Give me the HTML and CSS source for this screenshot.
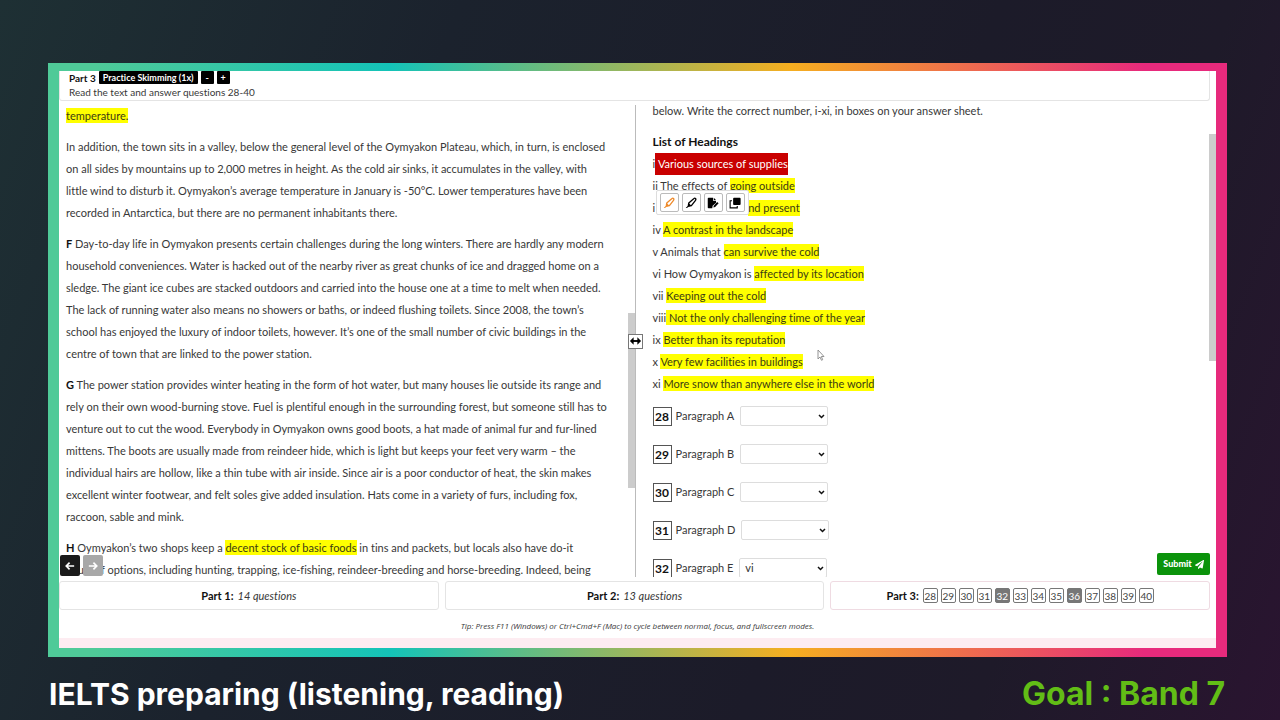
FILE: index.html
```html
<!DOCTYPE html>
<html lang="en">
<head>
<meta charset="utf-8">
<title>IELTS preparing</title>
<link rel="stylesheet" href="styles.css">
</head>
<body>
<main class="frame">
  <div class="app">
    <header class="part-head">
      <div class="part-title"><strong>Part 3</strong><button class="tag">Practice Skimming (1x)</button><button class="tag">-</button><button class="tag">+</button></div>
      <div>Read the text and answer questions 28-40</div>
    </header>
    <div class="panes">
      <section class="passage">
        <p><mark>temperature.</mark></p>
        <p>In addition, the town sits in a valley, below the general level of the Oymyakon Plateau, which, in turn, is enclosed<br>on all sides by mountains up to 2,000 metres in height. As the cold air sinks, it accumulates in the valley, with<br>little wind to disturb it. Oymyakon’s average temperature in January is -50°C. Lower temperatures have been<br>recorded in Antarctica, but there are no permanent inhabitants there.</p>
        <p><b>F</b> Day-to-day life in Oymyakon presents certain challenges during the long winters. There are hardly any modern<br>household conveniences. Water is hacked out of the nearby river as great chunks of ice and dragged home on a<br>sledge. The giant ice cubes are stacked outdoors and carried into the house one at a time to melt when needed.<br>The lack of running water also means no showers or baths, or indeed flushing toilets. Since 2008, the town’s<br>school has enjoyed the luxury of indoor toilets, however. It’s one of the small number of civic buildings in the<br>centre of town that are linked to the power station.</p>
        <p><b>G</b> The power station provides winter heating in the form of hot water, but many houses lie outside its range and<br>rely on their own wood-burning stove. Fuel is plentiful enough in the surrounding forest, but someone still has to<br>venture out to cut the wood. Everybody in Oymyakon owns good boots, a hat made of animal fur and fur-lined<br>mittens. The boots are usually made from reindeer hide, which is light but keeps your feet very warm – the<br>individual hairs are hollow, like a thin tube with air inside. Since air is a poor conductor of heat, the skin makes<br>excellent winter footwear, and felt soles give added insulation. Hats come in a variety of furs, including fox,<br>raccoon, sable and mink.</p>
        <p><b>H</b> Oymyakon’s two shops keep a <mark>decent stock of basic foods</mark> in tins and packets, but locals also have do-it<br>yourself options, including hunting, trapping, ice-fishing, reindeer-breeding and horse-breeding. Indeed, being</p>
        <span class="thumb thumb-left"></span>
        <nav class="pager">
          <button aria-label="Previous"><svg viewBox="0 0 12 12"><path d="M11 6H2M5.500 2 1.500 6l4 4"/></svg></button>
          <button class="off" aria-label="Next"><svg viewBox="0 0 12 12"><path d="M1 6h9M6.500 2l4 4-4 4"/></svg></button>
        </nav>
      </section>
      <button class="resizer" aria-label="Resize panes"><svg viewBox="0 0 14 10"><path d="M3 5h8" stroke="#000" stroke-width="2"/><path d="M5 1v8L1 5zM9 1v8l4-4z"/></svg></button>
      <section class="questions">
        <p>below. Write the correct number, i-xi, in boxes on your answer sheet.</p>
        <h2>List of Headings</h2>
        <ul class="headings">
          <li>i<span class="selected"> Various sources of supplies</span></li>
          <li>ii The effects of <mark>going outside</mark></li>
          <li class="covered">i<mark class="tail">nd present</mark>
            <div class="tools">
              <button class="orange" aria-label="Highlight"><svg viewBox="0 0 16 16"><path d="M5 8 12 2q1-1 2 0t0 2.500L8.500 11.500 5.500 12 4.500 11Z" fill="none" stroke="currentColor" stroke-width="1.700"/><path d="m5 8 3.500 3.500-2.500.8-3.500 2.200H1l2.800-3z"/></svg></button>
              <button aria-label="Clear highlight"><svg viewBox="0 0 16 16"><path d="M5 8 12 2q1-1 2 0t0 2.500L8.500 11.500 5.500 12 4.500 11Z" fill="none" stroke="currentColor" stroke-width="1.700"/><path d="m5 8 3.500 3.500-2.500.8-3.500 2.200H1l2.800-3z"/></svg></button>
              <button aria-label="Add note"><svg viewBox="0 0 16 16"><path d="M2 1h6v4h4v2.500L7.500 11.500 7 15H2q-1 0-1-1V2q0-1 1-1zM9 1l3 3H9z"/><path d="m8.500 14 .5-2.500 4.500-5 2 1.700-4.700 5z"/></svg></button>
              <button aria-label="Copy"><svg viewBox="0 0 16 16"><rect x="5.500" y="1" width="10" height="9.500" rx="1.200"/><path d="M4 5H1.500v9.500H11V12" fill="none" stroke="currentColor" stroke-width="1.500"/></svg></button>
            </div>
          </li>
          <li>iv <mark>A contrast in the landscape</mark></li>
          <li>v Animals that <mark>can survive the cold</mark></li>
          <li>vi How Oymyakon is <mark>affected by its location</mark></li>
          <li>vii <mark>Keeping out the cold</mark></li>
          <li>viii<mark> Not the only challenging time of the year</mark></li>
          <li>ix <mark>Better than its reputation</mark></li>
          <li>x <mark>Very few facilities in buildings</mark></li>
          <li>xi <mark>More snow than anywhere else in the world</mark></li>
        </ul>
        <div class="answers">
          <div class="answer"><b>28</b><label for="q28">Paragraph A</label><select id="q28"><option></option></select></div>
          <div class="answer"><b>29</b><label for="q29">Paragraph B</label><select id="q29"><option></option></select></div>
          <div class="answer"><b>30</b><label for="q30">Paragraph C</label><select id="q30"><option></option></select></div>
          <div class="answer"><b>31</b><label for="q31">Paragraph D</label><select id="q31"><option></option></select></div>
          <div class="answer"><b>32</b><label for="q32">Paragraph E</label><select id="q32"><option>vi</option></select></div>
        </div>
        <span class="thumb thumb-right"></span>
        <svg class="cursor" viewBox="0 0 8 12"><path d="M1 1v9l2-2 1.500 3.300 1.200-.6L4.300 7.500H7z" fill="#fff" stroke="#888" stroke-width=".9"/></svg>
        <button class="submit">Submit <svg viewBox="0 0 512 512"><path d="M476 3.200 12.500 270.600c-18.100 10.400-15.800 35.600 2.200 43.200L121 358.400l287.300-253.200c5.500-4.900 13.300 2.600 8.600 8.300L176 407v80.500c0 23.600 28.500 32.900 42.500 15.800L282 426l124.600 52.200c14.200 6 30.400-2.900 33-18.200l72-432C515 7.800 493.300-6.800 476 3.200z"/></svg></button>
      </section>
    </div>
    <nav class="parts">
      <div class="part"><b>Part 1:</b><i>14 questions</i></div>
      <div class="part"><b>Part 2:</b><i>13 questions</i></div>
      <div class="part current"><b>Part 3:</b>
        <div class="nums"><button>28</button><button>29</button><button>30</button><button>31</button><button class="done">32</button><button>33</button><button>34</button><button>35</button><button class="done">36</button><button>37</button><button>38</button><button>39</button><button>40</button></div>
      </div>
    </nav>
    <p class="tip">Tip: Press F11 (Windows) or Ctrl+Cmd+F (Mac) to cycle between normal, focus, and fullscreen modes.</p>
    <div class="strip"></div>
  </div>
</main>
<footer class="caption"><span>IELTS preparing (listening, reading)</span><span class="goal">Goal : Band 7</span></footer>
</body>
</html>
```
FILE: styles.css
```css
* { box-sizing: border-box; }
body {
  margin: 0;
  height: 100vh;
  display: flex;
  flex-direction: column;
  padding: 63px 53px 0 48px;
  background: linear-gradient(110deg, #1e3034 0%, #1b222d 30%, #1c1b29 65%, #1e1a29 80%, #2a1430 100%);
  font: 11px/22px Lato, "Open Sans", sans-serif;
  font-variant-ligatures: none;
  color: #383838;
}
p, h2, ul { margin: 0; padding: 0; }
button { font: inherit; padding: 0; border: 0; display: inline-flex; align-items: center; justify-content: center; }
b, strong, h2 { color: #111; font-weight: 700; }
svg { fill: currentColor; flex: none; }
mark { background: #ff0; color: #3c3c14; padding: 1px 0; }

.frame {
  flex: 1;
  min-height: 0;
  padding: 8px 11px 9px;
  display: flex;
  background: linear-gradient(90deg, #4fca98 0%, #4fca98 4%, #14c3b8 29%, #f5ae20 63%, #e72a7c 93%);
}
.app { flex: 1; min-width: 0; display: flex; flex-direction: column; background: #fff; }

.part-head {
  margin-right: 6px;
  padding: 0 9px 1px;
  border: 1px solid #e4e4e4;
  border-top: 0;
  border-radius: 0 0 3px 3px;
  font-size: 10px;
  line-height: 14px;
}
.part-title { display: flex; gap: 3px; height: 14px; }
.tag { background: #000; color: #fff; font-size: 9px; font-weight: 700; padding: 0 4px; min-width: 13px; height: 13px; border-radius: 1px; }

.panes { flex: 1; min-height: 0; margin-top: 4px; display: flex; }
.passage { position: relative; flex: 0 0 calc(50% - 2px); padding-left: 7px; overflow: hidden; white-space: nowrap; border-right: 1px solid #bbb; }
.passage p { margin-bottom: 9px; }
.thumb { position: absolute; width: 7px; background: #ccc; }
.thumb-left { right: 0; top: 208px; height: 175px; }
.thumb-right { right: 0; top: 29px; height: 227px; }
.pager { position: absolute; left: 1px; bottom: 1px; display: flex; gap: 3px; }
.pager button { width: 20px; height: 21px; background: #1a1a1a; color: #fff; border-radius: 2px; }
.pager .off { background: #a8a8a8; }
.pager svg { width: 10px; height: 10px; fill: none; stroke: currentColor; stroke-width: 2; }
.resizer { position: relative; z-index: 1; align-self: center; width: 15px; height: 15px; margin: 0 -7px 0 -8px; background: #fff; border: 1px solid #777; color: #000; }
.resizer svg { width: 13px; height: 10px; }

.questions { position: relative; flex: 1; min-width: 0; padding-left: 17px; overflow: hidden; }
.questions > p { margin: -5px 0 9px; }
.questions h2 { font-size: 12px; }
.headings { list-style: none; }
.headings li { height: 22px; white-space: pre-wrap; }
.selected { background: #c90000; color: #fff; display: inline-block; height: 22px; }
.covered { position: relative; display: flex; align-items: center; }
.tail { line-height: 14px; margin-left: 93px; }
.tools { position: absolute; left: 3px; top: -7px; display: flex; gap: 3px; padding: 2px 3px; background: #fff; border: 1px solid #ddd; border-radius: 2px; }
.tools button { width: 19px; height: 19px; background: #fff; color: #000; border: 1px solid #bbb; border-radius: 2px; }
.tools .orange { color: #ee8a2a; }
.tools svg { width: 12px; height: 12px; }
.answers { display: flex; flex-direction: column; gap: 18px; margin-top: 11px; }
.answer { display: flex; align-items: center; height: 20px; }
.answer b { width: 19px; height: 19px; border: 1px solid #555; text-align: center; font-size: 12px; line-height: 17px; margin-right: 4px; }
.answer select {
  appearance: none;
  width: 88px;
  height: 20px;
  margin-left: 6px;
  padding: 0 14px 0 5px;
  border: 1px solid #ddd;
  border-radius: 2px;
  background: #fff url("data:image/svg+xml,%3Csvg xmlns='http://www.w3.org/2000/svg' viewBox='0 0 7 5'%3E%3Cpath d='M1 1l2.5 2.5L6 1' fill='none' stroke='%23111' stroke-width='1.5'/%3E%3C/svg%3E") no-repeat right 2px center / 7px 5px;
  font: inherit;
  line-height: 18px;
  color: #333;
}
.cursor { position: absolute; left: 181px; top: 244px; width: 8px; height: 12px; }
.submit { position: absolute; right: 6px; bottom: 2px; width: 53px; height: 22px; gap: 3px; background: #0b930b; color: #fff; font-size: 9px; font-weight: 900; border-radius: 2px; }
.submit svg { width: 9px; height: 9px; }

.parts { display: grid; grid-template-columns: repeat(3, 1fr); gap: 6px; margin: 4px 6px 0 0; }
.part { display: flex; align-items: center; justify-content: center; gap: 4px; height: 29px; border: 1px solid #e4e4e4; border-radius: 3px; }
.current { border-color: #efdbe2; }
.nums { display: flex; gap: 3px; }
.nums button { width: 15px; height: 15px; border: 1px solid #777; border-radius: 2px; background: #fff; color: #444; font-size: 10px; }
.nums .done { background: #777; color: #fff; }
.tip { padding: 8px 0 5px; text-align: center; font: italic 8px/15px "Open Sans", sans-serif; }
.strip { height: 10px; background: #fdecf1; }

.caption { height: 63px; flex: none; display: flex; justify-content: space-between; align-items: center; padding: 10px 2px 0 1px; color: #fff; font: 700 30px/34px Inter, sans-serif; }
.goal { color: #62bd16; font-size: 32px; }
```
